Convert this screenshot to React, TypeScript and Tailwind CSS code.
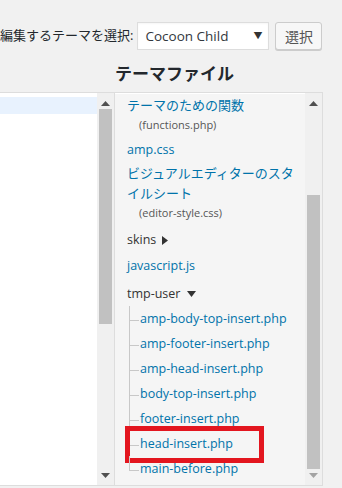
const FONT = "font-['Open_Sans','Noto_Sans_CJK_JP',sans-serif]";

const SUB_FILES = [
  "amp-body-top-insert.php",
  "amp-footer-insert.php",
  "amp-head-insert.php",
  "body-top-insert.php",
  "footer-insert.php",
  "head-insert.php",
  "main-before.php",
];

function Arrow({ dir, light }: { dir: "up" | "down"; light?: boolean }) {
  return (
    <svg width="9" height="5" viewBox="0 0 9 5" className="block">
      <polygon
        points={dir === "up" ? "4.5,0 9,5 0,5" : "0,0 9,0 4.5,5"}
        fill={light ? "#a3a3a3" : "#505050"}
      />
    </svg>
  );
}

function TreeRow({ name, last, marked }: { name: string; last: boolean; marked: boolean }) {
  return (
    <li className="relative flex h-[25px]">
      <div className="flex w-[10px] flex-col">
        <div className="h-[15px] border-b border-l border-[#c8c8c8]" />
        {!last && <div className="flex-1 border-l border-[#c8c8c8]" />}
      </div>
      <span className="ml-[1px] text-[12.5px] leading-[25px] text-[#0073aa]">{name}</span>
      {marked && (
        <div className="absolute left-[-4px] top-[-5px] h-[37px] w-[139px] border-[5px] border-[#e3161f]" />
      )}
    </li>
  );
}

export default function App() {
  return (
    <div className={`h-[488px] w-[342px] overflow-hidden bg-[#f1f1f1] ${FONT}`}>
      {/* theme selector */}
      <div className="flex items-center pt-[22px]">
        <span className="text-[13px] text-[#23282d] whitespace-nowrap">編集するテーマを選択:</span>
        <div className="ml-[4px] flex h-[28px] w-[132px] items-center justify-between border border-[#ddd] bg-white pl-[7px] pr-[6px] shadow-[inset_0_1px_2px_rgba(0,0,0,0.04)]">
          <span className="text-[13.5px] text-[#32373c]">Cocoon Child</span>
          <span className="text-[9px] text-[#333]">▼</span>
        </div>
        <button className="ml-[6px] h-[28px] w-[47px] rounded-[3px] border border-[#ccc] bg-[#f7f7f7] text-[14px] text-[#555] shadow-[0_1px_0_#ccc]">
          選択
        </button>
      </div>

      {/* heading */}
      <h2 className="ml-[115px] mt-[12px] text-[17px] font-bold leading-[24px] text-[#23282d]">テーマファイル</h2>

      {/* editor + file list */}
      <div className="mt-[6px] flex h-[394px] w-[323px]">
        {/* textarea */}
        <div className="flex w-[114px] border-y border-[#ddd] bg-white">
          <div className="flex-1 pt-[4px]">
            <div className="h-[17px] bg-[#e8f2fe]" />
          </div>
          <div className="flex w-[17px] flex-col items-center bg-[#f0f0f0]">
            <div className="pt-[8px]">
              <Arrow dir="up" />
            </div>
            <div className="mt-[3px] h-[215px] w-[13px] bg-[#c1c1c1]" />
            <div className="mt-auto pb-[7px]">
              <Arrow dir="down" />
            </div>
          </div>
        </div>

        {/* template side */}
        <div className="flex flex-1 border-x border-y border-[#ddd] bg-[#f5f5f5]">
          <div className="flex-1 border-t border-white pl-[12px]">
            <ul className="pt-[1px]">
              <li className="leading-[20px]">
                <div className="text-[13px] text-[#0073aa]">テーマのための関数</div>
                <div className="pl-[12px] text-[11px] text-[#555]">(functions.php)</div>
              </li>
              <li className="mt-[5px] text-[12.5px] leading-[20px] text-[#0073aa]">amp.css</li>
              <li className="mt-[3px] leading-[20px]">
                <div className="text-[13px] text-[#0073aa]">
                  ビジュアルエディターのスタ
                  <br />
                  イルシート
                </div>
                <div className="pl-[12px] text-[11px] text-[#555]">(editor-style.css)</div>
              </li>
              <li className="mt-[7px] flex items-center gap-[6px] text-[12.5px] leading-[20px] text-[#333]">
                skins
                <svg width="6" height="9" viewBox="0 0 6 9">
                  <polygon points="0,0 6,4.5 0,9" fill="#333" />
                </svg>
              </li>
              <li className="mt-[6px] text-[12.5px] leading-[20px] text-[#0073aa]">javascript.js</li>
              <li className="mt-[8px]">
                <div className="flex items-center gap-[7px] text-[12.5px] leading-[20px] text-[#333]">
                  tmp-user
                  <svg width="9" height="6" viewBox="0 0 9 6">
                    <polygon points="0,0 9,0 4.5,6" fill="#333" />
                  </svg>
                </div>
                <ul className="ml-[2px] pt-[2px]">
                  {SUB_FILES.map((f, i) => (
                    <TreeRow
                      key={f}
                      name={f}
                      last={i === SUB_FILES.length - 1}
                      marked={f === "head-insert.php"}
                    />
                  ))}
                </ul>
              </li>
            </ul>
          </div>
          <div className="flex w-[17px] flex-col items-center bg-[#f0f0f0]">
            <div className="pt-[8px]">
              <Arrow dir="up" />
            </div>
            <div className="mt-[89px] h-[274px] w-[13px] bg-[#c1c1c1]" />
            <div className="mt-auto pb-[7px]">
              <Arrow dir="down" light />
            </div>
          </div>
        </div>
      </div>
    </div>
  );
}
